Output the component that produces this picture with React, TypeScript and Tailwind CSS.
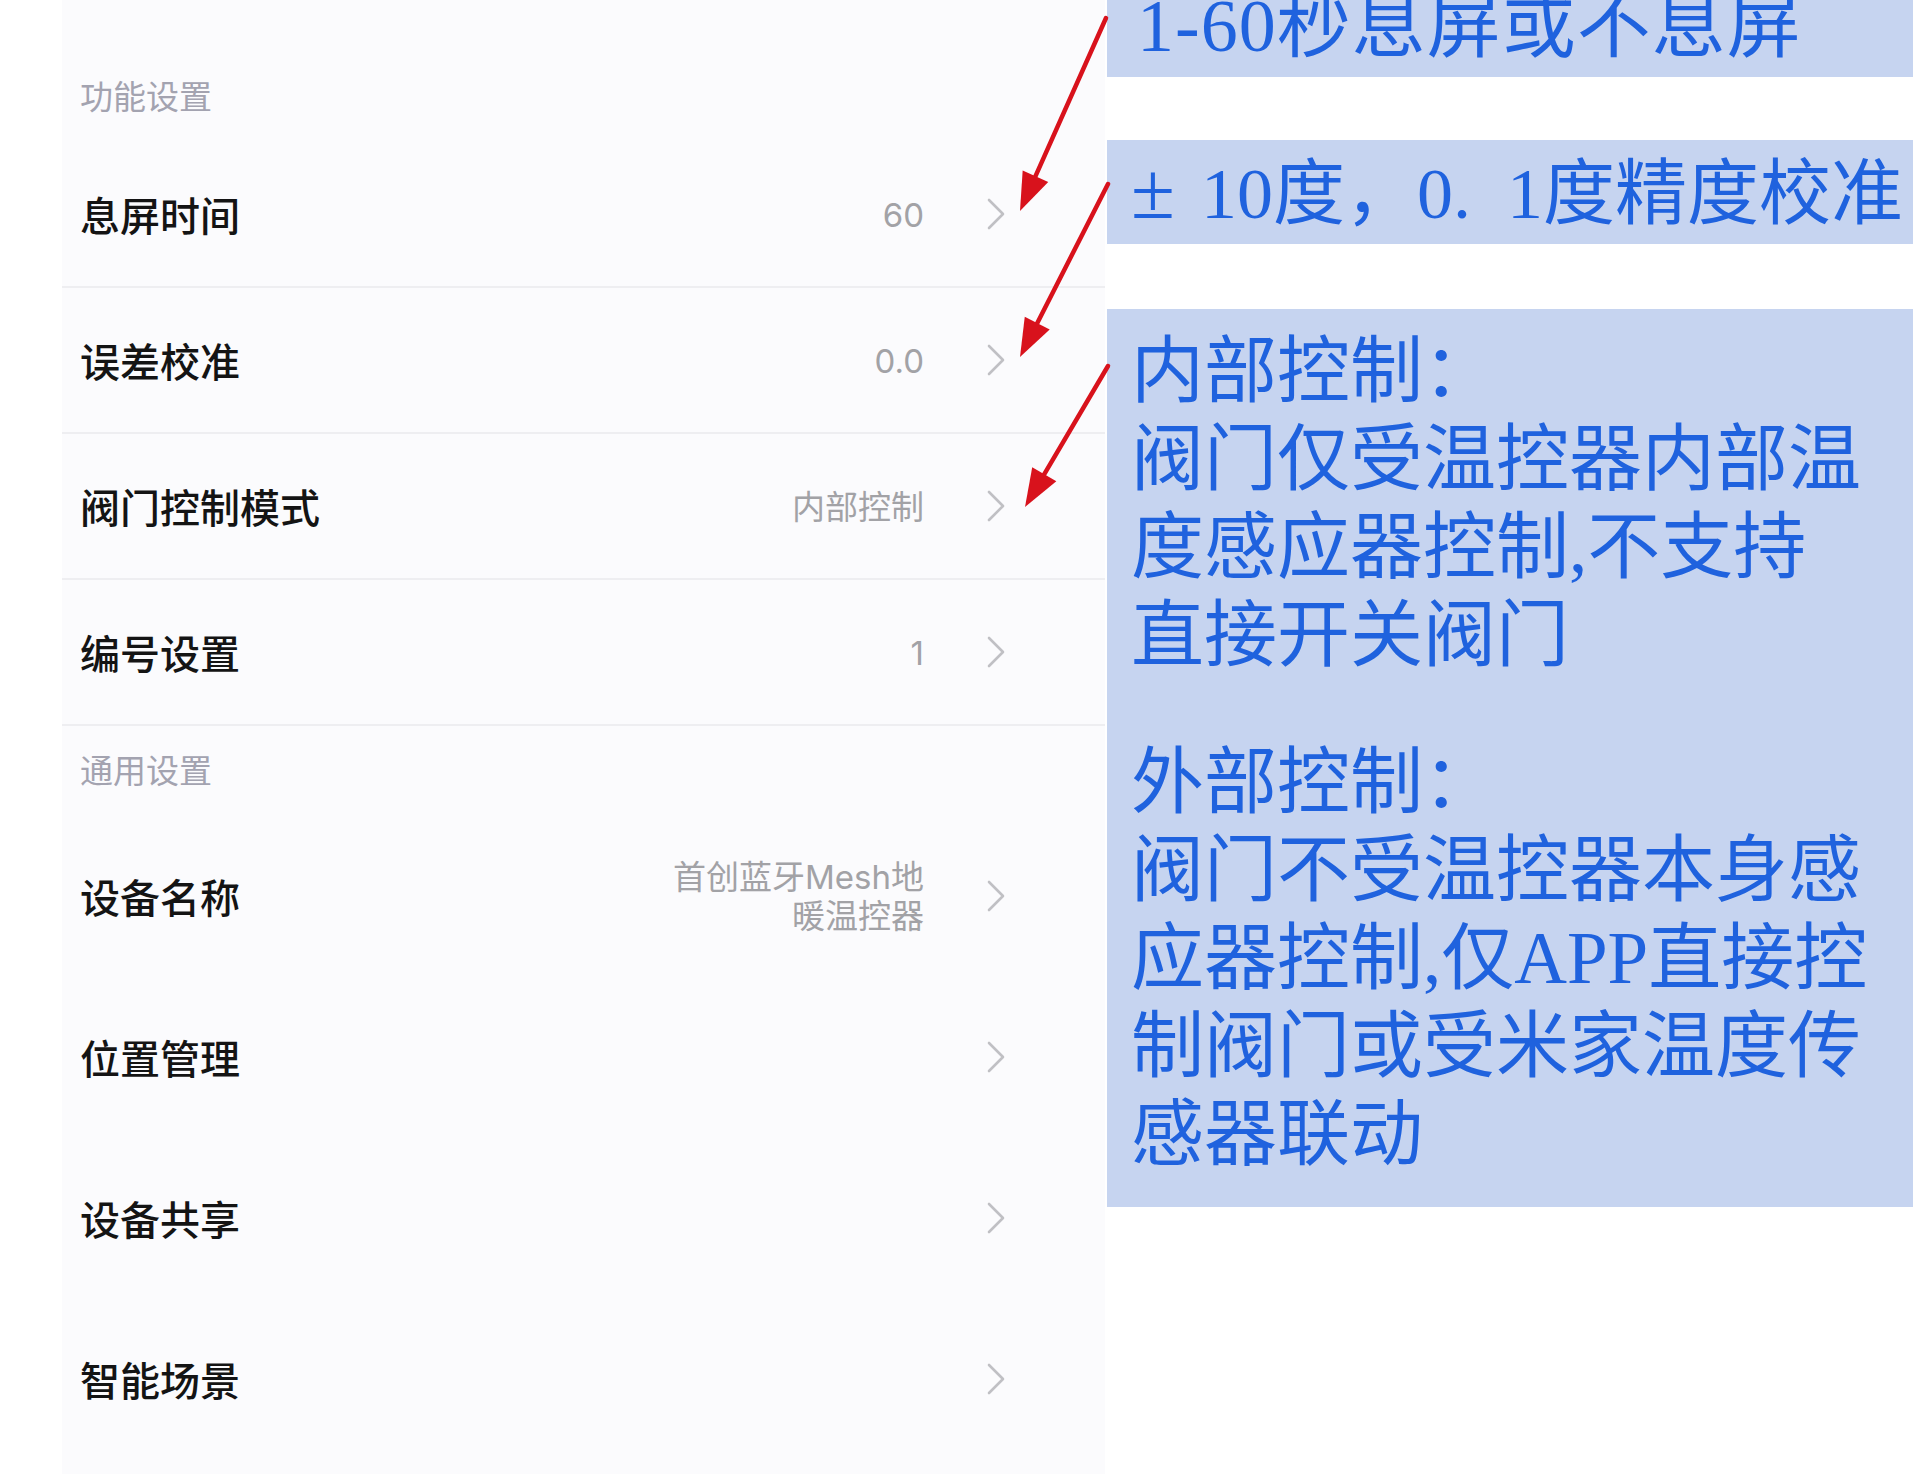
import React from "react";

const sans = "font-['Noto_Sans_CJK_SC','Noto_Sans',sans-serif]";
const serif = "font-['Liberation_Serif','Noto_Sans_CJK_SC',serif]";

type Row = { title: string; value?: string[] };

const featureRows: Row[] = [
    { title: "息屏时间", value: ["60"] },
    { title: "误差校准", value: ["0.0"] },
    { title: "阀门控制模式", value: ["内部控制"] },
    { title: "编号设置", value: ["1"] },
];

const generalRows: Row[] = [
    { title: "设备名称", value: ["首创蓝牙Mesh地", "暖温控器"] },
    { title: "位置管理" },
    { title: "设备共享" },
    { title: "智能场景" },
];

function Chevron() {
    return (
        <svg width="20" height="32" viewBox="0 0 20 32" className="shrink-0">
            <polyline points="3,2 17,16 3,30" fill="none" stroke="#c0c0c4" strokeWidth="2.6" strokeLinecap="round" strokeLinejoin="round" />
        </svg>
    );
}

function SettingRow({ row, divided }: { row: Row; divided: boolean }) {
    return (
        <div
            className={
                divided
                    ? "flex items-center h-[146px] border-b-2 border-[#eeeef1] pl-[18px]"
                    : "flex items-center h-[161px] pl-[18px]"
            }
        >
            <div className="text-[40px] leading-[48px] font-medium text-[#141414]">{row.title}</div>
            <div className="ml-auto pt-[3px] text-right text-[33px] leading-[39px] text-[#a2a2a6] font-['Inter','Noto_Sans_CJK_SC',sans-serif]">
                {row.value?.[0]}
                {row.value?.[1] && (
                    <>
                        <br />
                        {row.value[1]}
                    </>
                )}
            </div>
            <div className="w-[181px] flex justify-end pr-[99px]">
                <Chevron />
            </div>
        </div>
    );
}

function Arrow({ x1, y1, x2, y2 }: { x1: number; y1: number; x2: number; y2: number }) {
    const dx = x2 - x1;
    const dy = y2 - y1;
    const len = Math.hypot(dx, dy);
    const ux = dx / len;
    const uy = dy / len;
    const bx = x2 - ux * 38;
    const by = y2 - uy * 38;
    const px = -uy * 14;
    const py = ux * 14;
    return (
        <g>
            <line x1={x1} y1={y1} x2={bx + ux * 4} y2={by + uy * 4} stroke="#d8121c" strokeWidth="4.5" strokeLinecap="round" />
            <polygon points={`${x2},${y2} ${bx + px},${by + py} ${bx - px},${by - py}`} fill="#d8121c" />
        </g>
    );
}

export default function App() {
    return (
        <div className={`relative w-[1920px] h-[1474px] bg-white flex overflow-hidden ${sans}`}>
            {/* settings list */}
            <div className="ml-[62px] w-[1043px] h-full bg-[#fbfbfd]">
                <div className="h-[142px] pt-[77px] pl-[18px] text-[33px] leading-[36px] text-[#a3a3b0]">功能设置</div>
                {featureRows.map((r) => (
                    <SettingRow key={r.title} row={r} divided />
                ))}
                <div className="h-[89px] pt-[25px] pl-[18px] text-[33px] leading-[36px] text-[#a3a3b0]">通用设置</div>
                {generalRows.map((r) => (
                    <SettingRow key={r.title} row={r} divided={false} />
                ))}
            </div>

            {/* annotations */}
            <div className={`ml-[2px] w-[806px] flex flex-col text-[#1f62de] ${serif}`}>
                <div className="h-[77px] overflow-hidden bg-[#c6d4f0] pl-[30px]">
                    <div className="-mt-[12px] text-[74px] leading-[76px] tracking-[1px]">1-60秒息屏或不息屏</div>
                </div>
                <div className="mt-[63px] h-[104px] bg-[#c6d4f0] pl-[24px] flex items-center">
                    <div className="text-[72px] leading-[80px]">
                        <span className="inline-block w-[70px] text-[80px]">±</span>10度，0.&nbsp;&nbsp;1度精度校准
                    </div>
                </div>
                <div className="mt-[65px] h-[898px] bg-[#c6d4f0] pl-[24px] pt-[19px] text-[73px] leading-[88px]">
                    <div>内部控制：</div>
                    <div>阀门仅受温控器内部温</div>
                    <div>度感应器控制,不支持</div>
                    <div>直接开关阀门</div>
                    <div className="mt-[59px]">外部控制：</div>
                    <div>阀门不受温控器本身感</div>
                    <div>应器控制,仅APP直接控</div>
                    <div>制阀门或受米家温度传</div>
                    <div>感器联动</div>
                </div>
            </div>

            <svg className="absolute inset-0 pointer-events-none" width="1920" height="1474">
                <Arrow x1={1106} y1={18} x2={1020} y2={211} />
                <Arrow x1={1108} y1={184} x2={1020} y2={357} />
                <Arrow x1={1108} y1={366} x2={1025} y2={507} />
            </svg>
        </div>
    );
}
